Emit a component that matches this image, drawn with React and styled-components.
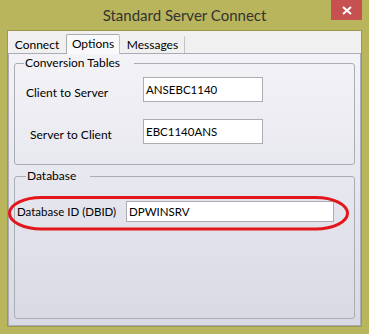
import React from 'react'
import styled, { createGlobalStyle } from 'styled-components'

const GlobalStyle = createGlobalStyle`
  html, body {
    margin: 0;
    padding: 0;
    background: #b9b55c;
  }
  * { box-sizing: border-box; }
`

const Window = styled.div`
  width: 369px;
  height: 334px;
  background: #b9b55c;
  display: flex;
  flex-direction: column;
  font-family: Lato, "Noto Sans", sans-serif;
  font-size: 11.5px;
  color: #000;
  overflow: hidden;
`

const TitleBar = styled.div`
  height: 30px;
  display: flex;
  align-items: flex-start;
  padding: 0 7px 0 38px;
`

const Title = styled.div`
  flex: 1;
  height: 30px;
  line-height: 31px;
  text-align: center;
  font-size: 15px;
  color: #333;
`

const CloseButton = styled.div`
  width: 31px;
  height: 20px;
  background: #c75050;
  display: flex;
  align-items: center;
  justify-content: center;
`

const Client = styled.div`
  flex: 1;
  margin: 0 7px 7px 7px;
  border: 1px solid #9c994c;
  background: #f0f0f0;
  display: flex;
  flex-direction: column;
`

const TabStrip = styled.div`
  height: 22px;
  display: flex;
  align-items: flex-end;
  position: relative;
  z-index: 1;
`

const Tab = styled.div`
  width: ${p => p.w}px;
  height: ${p => (p.active ? 20 : 17)}px;
  margin-bottom: ${p => (p.active ? -1 : 0)}px;
  display: flex;
  align-items: center;
  justify-content: center;
  padding-bottom: ${p => (p.active ? 3 : 1)}px;
  font-size: 12px;
  background: ${p => (p.active ? '#f9f9fb' : '#f0f0f0')};
  border: 1px solid ${p => (p.active ? '#adadad' : 'transparent')};
  border-bottom: none;
  border-right-color: ${p => (p.active || p.last ? '#c2c2c2' : 'transparent')};
  border-radius: ${p => (p.active ? '2px 2px 0 0' : '0')};
`

const Panel = styled.div`
  flex: 1;
  border: 1px solid #aaadb6;
  background: linear-gradient(#f3f3f7, #d9d9e5);
  display: flex;
  flex-direction: column;
  padding: 2px 5px 6px 5px;
  gap: 4px;
`

const Group = styled.fieldset`
  margin: 0;
  min-width: 0;
  border: 1px solid #a9adb5;
  border-radius: 3px;
  padding: ${p => p.pad};
  flex: ${p => (p.grow ? 1 : 'none')};
  display: flex;
  flex-direction: column;
  gap: ${p => p.gap || 0}px;
`

const Legend = styled.legend`
  margin-left: 9px;
  padding: 0 ${p => p.after}px 0 1px;
  line-height: 14px;
  font-size: 12px;
`

const Row = styled.div`
  display: grid;
  grid-template-columns: ${p => p.label}px ${p => p.field}px;
  align-items: center;
  position: relative;
`

const Label = styled.div`
  padding-left: ${p => p.indent || 0}px;
  padding-top: ${p => p.drop || 0}px;
  white-space: nowrap;
  font-size: ${p => p.size || 12}px;
`

const TextBox = styled.div`
  height: ${p => p.h}px;
  background: #fff;
  border: 1px solid #abadb3;
  padding-left: 2px;
  display: flex;
  align-items: center;
`

const Mark = styled.svg`
  position: absolute;
  left: -9px;
  top: -5px;
  pointer-events: none;
`

export default function App() {
  return (
    <>
      <GlobalStyle />
      <Window>
        <TitleBar>
          <Title>Standard Server Connect</Title>
          <CloseButton>
            <svg width="10" height="9" viewBox="0 0 10 9">
              <path d="M1 1 L9 8 M9 1 L1 8" stroke="#fff" strokeWidth="2" />
            </svg>
          </CloseButton>
        </TitleBar>
        <Client>
          <TabStrip>
            <Tab w={58}>Connect</Tab>
            <Tab w={54} active>Options</Tab>
            <Tab w={65} last>Messages</Tab>
          </TabStrip>
          <Panel>
            <Group pad="7px 0 20px 0" gap={17}>
              <Legend after={14}>Conversion Tables</Legend>
              <Row label={128} field={120}>
                <Label indent={11} drop={6}>Client to Server</Label>
                <TextBox h={25}>ANSEBC1140</TextBox>
              </Row>
              <Row label={128} field={120}>
                <Label indent={15} drop={6}>Server to Client</Label>
                <TextBox h={25}>EBC1140ANS</TextBox>
              </Row>
            </Group>
            <Group grow pad="18px 0 0 2px">
              <Legend after={14}>Database</Legend>
              <Row label={109} field={208}>
                <Label size={11.5}>Database ID (DBID)</Label>
                <TextBox h={21}>DPWINSRV</TextBox>
                <Mark width="341" height="35" viewBox="0 0 341 35">
                  <rect x="1.5" y="1.5" width="338" height="31.5" rx="32" ry="16"
                    fill="none" stroke="#e3161b" strokeWidth="3" />
                </Mark>
              </Row>
            </Group>
          </Panel>
        </Client>
      </Window>
    </>
  )
}
